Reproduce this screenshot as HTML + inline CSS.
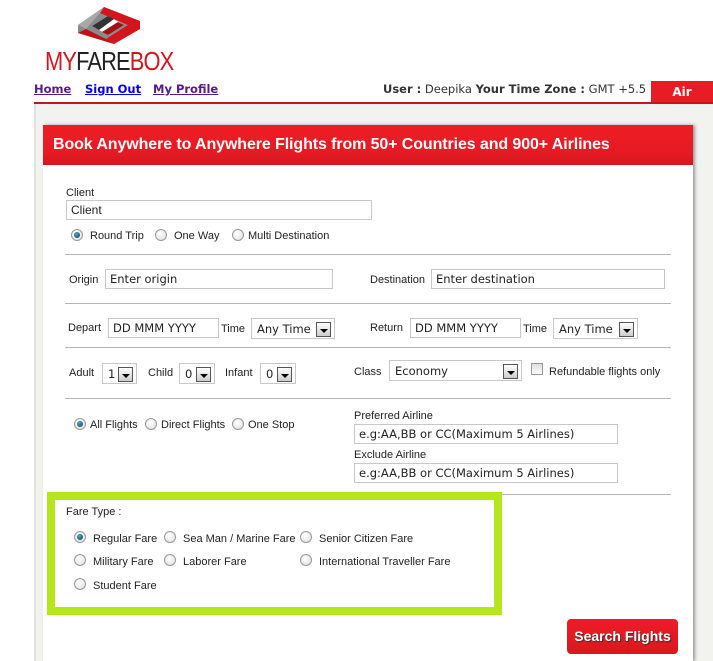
<!DOCTYPE html>
<html><head><meta charset="utf-8"><style>
*{box-sizing:border-box;margin:0;padding:0}
body{width:713px;height:661px;overflow:hidden;background:#fff;font-family:"Liberation Sans",Arial,sans-serif;font-size:11px;color:#222;position:relative}
.a{position:absolute}
.nav a{font-family:"DejaVu Sans",Verdana,sans-serif;font-weight:bold;font-size:11.5px;text-decoration:underline;position:absolute;top:82px}
.inp{position:absolute;height:20px;border:1px solid #c8c8c8;background:#fff;font-family:"DejaVu Sans",Verdana,sans-serif;font-size:11.5px;padding:2px 4px;color:#222;line-height:14px}
.sel{position:absolute;height:21px;border:1px solid #c8c8c8;background:#fff;font-family:"DejaVu Sans",Verdana,sans-serif;font-size:11.5px;padding:3px 5px;line-height:14px}
.sel i{position:absolute;right:3px;top:3px;width:15px;height:15px;border:1px solid #555;background:linear-gradient(#fff,#ccc)}
.sel i:after{content:"";position:absolute;left:3px;top:6px;border-left:4px solid transparent;border-right:4px solid transparent;border-top:4px solid #000}
.r{position:absolute;width:12px;height:12px;border-radius:50%;border:1px solid #999;background:radial-gradient(circle at 40% 35%,#fff,#ddd)}
.r.on:after{content:"";position:absolute;left:2px;top:2px;width:6px;height:6px;border-radius:50%;background:radial-gradient(circle at 40% 35%,#5ab,#035)}
.t{position:absolute;font-size:11px;color:#222;white-space:nowrap}
.hr{position:absolute;left:65px;width:606px;height:1px;background:#b5b5b5}
</style></head><body>
<!-- logo -->
<svg class="a" style="left:78px;top:7px" width="62" height="37" viewBox="0 0 62 37">
<polygon points="0,18 26,0 62,14 62,22 36,37 0,26" fill="#8a8a8a"/>
<polygon points="26,0 62,14 62,22 36,37 28,32 50,18 22,6" fill="#d3161e"/>
<polygon points="0,18 26,0 22,6 8,22" fill="#a8a8a8"/>
<polygon points="0,26 36,37 28,32 8,22" fill="#c01018"/>
<polygon points="14,19 30,9 46,18 30,28" fill="#fff"/>
<polygon points="14,19 30,9 36,12 21,23" fill="#333"/>
<polygon points="30,28 46,18 40,15 24,25" fill="#a01015"/>
</svg>
<div class="a" style="left:45px;top:46px;font-size:26px;letter-spacing:-1px;transform:scaleX(0.84);transform-origin:0 0;font-family:'Liberation Sans',sans-serif"><span style="color:#d0161e">MY</span><span style="color:#222">FARE</span><span style="color:#d0161e">BOX</span></div>
<div class="nav"><a style="left:34px;color:#551a8b">Home</a><a style="left:85px;color:#0000ee">Sign Out</a><a style="left:153px;color:#551a8b">My Profile</a></div>
<div class="a" style="left:383px;top:82px;font-family:'DejaVu Sans',Verdana,sans-serif;font-size:11.5px;color:#333"><b>User :</b> Deepika <b>Your Time Zone :</b> GMT +5.5</div>
<div class="a" style="left:651px;top:81px;width:62px;height:22px;background:#e81c24;color:#fff;font-family:'DejaVu Sans',sans-serif;font-weight:bold;font-size:12px;text-align:center;line-height:22px">Air</div>
<div class="a" style="left:34px;top:102px;width:679px;height:2px;background:#c4161c"></div>
<div class="a" style="left:34px;top:104px;width:679px;height:557px;background:#f2f2ef;border-left:2px solid #e2e2dc"></div>
<div class="a" style="left:43px;top:125px;width:650px;height:536px;background:#fff;box-shadow:2px 0 3px #999"></div>
<div class="a" style="left:43px;top:125px;width:650px;height:40px;background:linear-gradient(#ee1c25,#e51b24 70%,#d01820);color:#fff;font-weight:bold;font-size:16px;padding:11px 0 0 10px;letter-spacing:-0.1px">Book Anywhere to Anywhere Flights from 50+ Countries and 900+ Airlines</div>

<div class="t" style="left:66px;top:187px">Client</div>
<div class="inp" style="left:66px;top:200px;width:306px;font-family:'Liberation Sans',sans-serif;font-size:12px">Client</div>
<div class="r on" style="left:71px;top:229px"></div><div class="t" style="left:90px;top:230px">Round Trip</div>
<div class="r" style="left:155px;top:229px"></div><div class="t" style="left:174px;top:230px">One Way</div>
<div class="r" style="left:232px;top:229px"></div><div class="t" style="left:248px;top:230px">Multi Destination</div>
<div class="hr" style="top:254px"></div>

<div class="t" style="left:69px;top:274px">Origin</div>
<div class="inp" style="left:105px;top:269px;width:228px">Enter origin</div>
<div class="t" style="left:370px;top:274px">Destination</div>
<div class="inp" style="left:431px;top:269px;width:234px">Enter destination</div>
<div class="hr" style="top:303px"></div>

<div class="t" style="left:68px;top:322px">Depart</div>
<div class="inp" style="left:108px;top:318px;width:111px">DD MMM YYYY</div>
<div class="t" style="left:221px;top:323px">Time</div>
<div class="sel" style="left:251px;top:318px;width:84px">Any Time<i></i></div>
<div class="t" style="left:370px;top:322px">Return</div>
<div class="inp" style="left:410px;top:318px;width:111px">DD MMM YYYY</div>
<div class="t" style="left:523px;top:323px">Time</div>
<div class="sel" style="left:553px;top:318px;width:85px">Any Time<i></i></div>
<div class="hr" style="top:347px"></div>

<div class="t" style="left:69px;top:367px">Adult</div>
<div class="sel" style="left:102px;top:363px;width:35px">1<i></i></div>
<div class="t" style="left:148px;top:367px">Child</div>
<div class="sel" style="left:179px;top:363px;width:36px">0<i></i></div>
<div class="t" style="left:225px;top:367px">Infant</div>
<div class="sel" style="left:260px;top:363px;width:36px">0<i></i></div>
<div class="t" style="left:354px;top:366px">Class</div>
<div class="sel" style="left:389px;top:360px;width:133px">Economy<i></i></div>
<div class="a" style="left:531px;top:363px;width:12px;height:12px;border:1px solid #999;background:linear-gradient(#ddd,#fff)"></div>
<div class="t" style="left:549px;top:366px">Refundable flights only</div>
<div class="hr" style="top:398px"></div>

<div class="r on" style="left:74px;top:418px"></div><div class="t" style="left:90px;top:419px">All Flights</div>
<div class="r" style="left:145px;top:418px"></div><div class="t" style="left:161px;top:419px">Direct Flights</div>
<div class="r" style="left:232px;top:418px"></div><div class="t" style="left:248px;top:419px">One Stop</div>
<div class="t" style="left:354px;top:410px">Preferred Airline</div>
<div class="inp" style="left:354px;top:424px;width:264px">e.g:AA,BB or CC(Maximum 5 Airlines)</div>
<div class="t" style="left:354px;top:449px">Exclude Airline</div>
<div class="inp" style="left:354px;top:463px;width:264px">e.g:AA,BB or CC(Maximum 5 Airlines)</div>
<div class="hr" style="top:494px"></div>

<div class="a" style="left:47px;top:492px;width:455px;height:123px;border:8px solid #b5e61d;background:#fff"></div>
<div class="t" style="left:66px;top:506px">Fare Type :</div>
<div class="r on" style="left:74px;top:531px"></div><div class="t" style="left:93px;top:533px">Regular Fare</div>
<div class="r" style="left:164px;top:531px"></div><div class="t" style="left:183px;top:533px">Sea Man / Marine Fare</div>
<div class="r" style="left:300px;top:531px"></div><div class="t" style="left:319px;top:533px">Senior Citizen Fare</div>
<div class="r" style="left:74px;top:554px"></div><div class="t" style="left:93px;top:556px">Military Fare</div>
<div class="r" style="left:164px;top:554px"></div><div class="t" style="left:183px;top:556px">Laborer Fare</div>
<div class="r" style="left:300px;top:554px"></div><div class="t" style="left:319px;top:556px">International Traveller Fare</div>
<div class="r" style="left:74px;top:578px"></div><div class="t" style="left:93px;top:580px">Student Fare</div>

<div class="a" style="left:567px;top:619px;width:111px;height:35px;border-radius:4px;background:linear-gradient(#ee1c25,#d8181f);color:#fff;font-weight:bold;font-size:14px;text-align:center;line-height:35px;text-shadow:1px 1px 1px #333">Search Flights</div>
</body></html>
